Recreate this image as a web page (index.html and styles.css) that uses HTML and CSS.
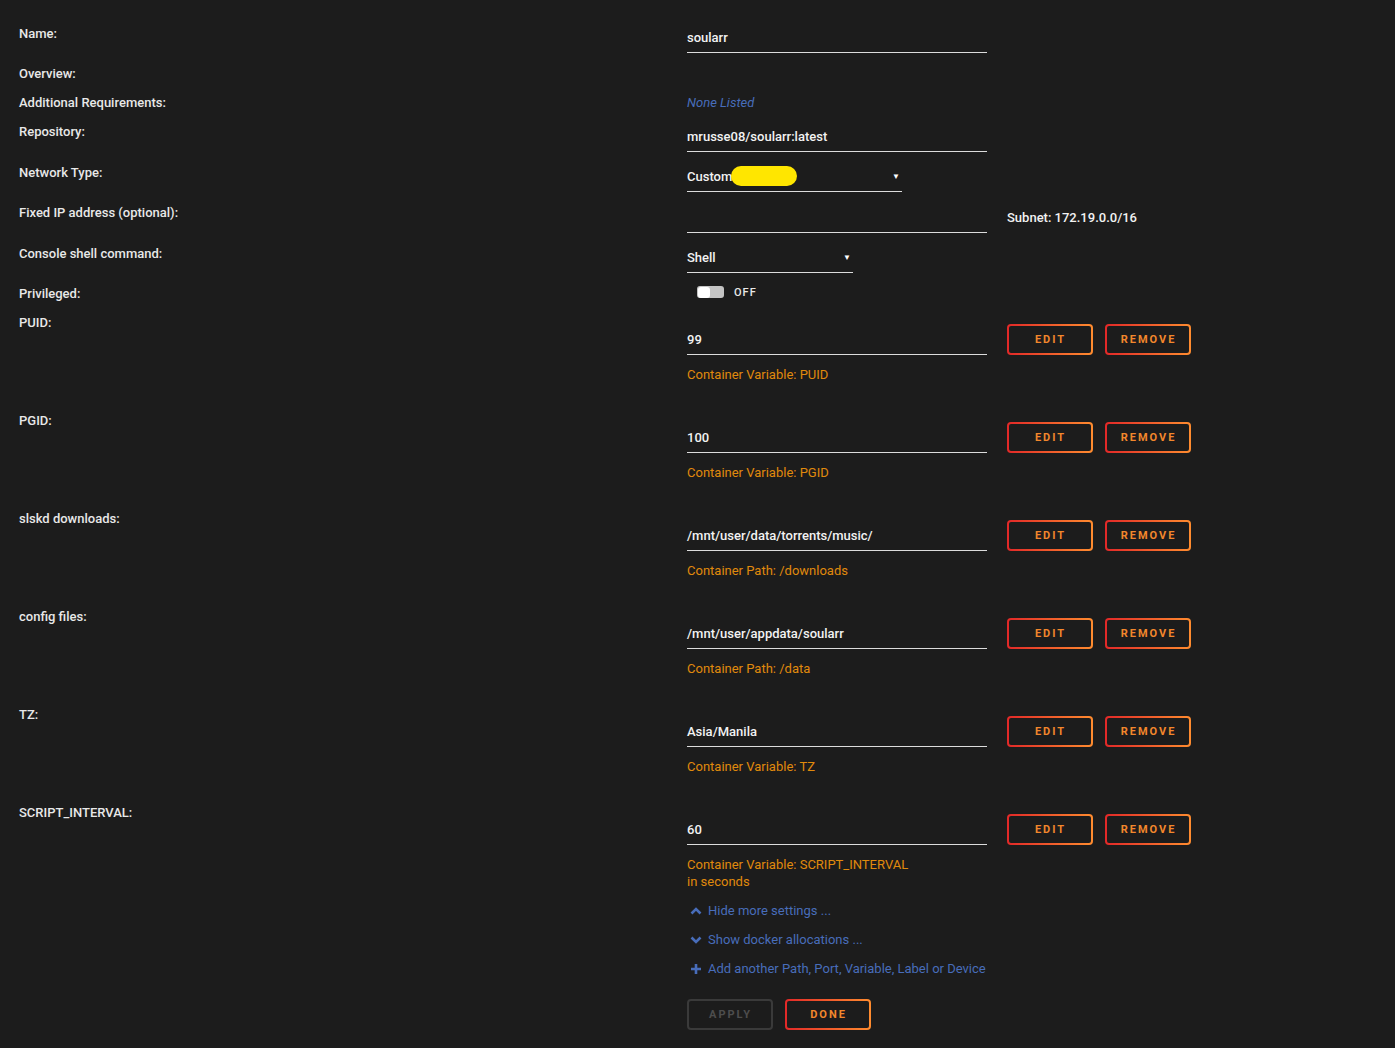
FILE: index.html
```html
<!DOCTYPE html>
<html>
<head>
<meta charset="utf-8">
<link rel="stylesheet" href="styles.css">
</head>
<body>
<div class="page">
  <div class="row r-name">
    <div class="label">Name:</div>
    <div class="value"><div class="input w300">soularr</div></div>
  </div>
  <div class="row r-short">
    <div class="label">Overview:</div>
    <div class="value"></div>
  </div>
  <div class="row r-short">
    <div class="label">Additional Requirements:</div>
    <div class="value"><span class="none">None Listed</span></div>
  </div>
  <div class="row r-field">
    <div class="label">Repository:</div>
    <div class="value"><div class="input w300 h31">mrusse08/soularr:latest</div></div>
  </div>
  <div class="row r-field">
    <div class="label">Network Type:</div>
    <div class="value">
      <div class="input select w215">
        <span class="sel-text">Custom<span class="redact"></span></span>
        <span class="arrow">▼</span>
      </div>
    </div>
  </div>
  <div class="row r-field">
    <div class="label">Fixed IP address (optional):</div>
    <div class="value inline">
      <div class="input w300 h31"></div>
      <span class="subnet">Subnet: 172.19.0.0/16</span>
    </div>
  </div>
  <div class="row r-field">
    <div class="label">Console shell command:</div>
    <div class="value">
      <div class="input select w166">
        <span>Shell</span>
        <span class="arrow">▼</span>
      </div>
    </div>
  </div>
  <div class="row r-short">
    <div class="label">Privileged:</div>
    <div class="value">
      <div class="switch"><span class="track"><span class="knob"></span></span><span class="off">OFF</span></div>
    </div>
  </div>

  <div class="row r-config">
    <div class="label">PUID:</div>
    <div class="value cfg">
      <div class="cfg-line">
        <div class="input w300 h31">99</div>
        <div class="btns"><span class="btn">EDIT</span><span class="btn">REMOVE</span></div>
      </div>
      <div class="desc">Container Variable: PUID</div>
    </div>
  </div>
  <div class="row r-config">
    <div class="label">PGID:</div>
    <div class="value cfg">
      <div class="cfg-line">
        <div class="input w300 h31">100</div>
        <div class="btns"><span class="btn">EDIT</span><span class="btn">REMOVE</span></div>
      </div>
      <div class="desc">Container Variable: PGID</div>
    </div>
  </div>
  <div class="row r-config">
    <div class="label">slskd downloads:</div>
    <div class="value cfg">
      <div class="cfg-line">
        <div class="input w300 h31">/mnt/user/data/torrents/music/</div>
        <div class="btns"><span class="btn">EDIT</span><span class="btn">REMOVE</span></div>
      </div>
      <div class="desc">Container Path: /downloads</div>
    </div>
  </div>
  <div class="row r-config">
    <div class="label">config files:</div>
    <div class="value cfg">
      <div class="cfg-line">
        <div class="input w300 h31">/mnt/user/appdata/soularr</div>
        <div class="btns"><span class="btn">EDIT</span><span class="btn">REMOVE</span></div>
      </div>
      <div class="desc">Container Path: /data</div>
    </div>
  </div>
  <div class="row r-config">
    <div class="label">TZ:</div>
    <div class="value cfg">
      <div class="cfg-line">
        <div class="input w300 h31">Asia/Manila</div>
        <div class="btns"><span class="btn">EDIT</span><span class="btn">REMOVE</span></div>
      </div>
      <div class="desc">Container Variable: TZ</div>
    </div>
  </div>
  <div class="row r-last">
    <div class="label">SCRIPT_INTERVAL:</div>
    <div class="value cfg">
      <div class="cfg-line">
        <div class="input w300 h31">60</div>
        <div class="btns"><span class="btn">EDIT</span><span class="btn">REMOVE</span></div>
      </div>
      <div class="desc">Container Variable: SCRIPT_INTERVAL<br>in seconds</div>
      <div class="links">
        <div class="link"><svg class="ico" viewBox="0 0 12 12"><path d="M1.5 8.5 L6 4 L10.5 8.5" fill="none" stroke="currentColor" stroke-width="2.6" stroke-linejoin="miter"/></svg>Hide more settings ...</div>
        <div class="link"><svg class="ico" viewBox="0 0 12 12"><path d="M1.5 3.5 L6 8 L10.5 3.5" fill="none" stroke="currentColor" stroke-width="2.6" stroke-linejoin="miter"/></svg>Show docker allocations ...</div>
        <div class="link"><svg class="ico" viewBox="0 0 12 12"><path d="M6 1 V11 M1 6 H11" fill="none" stroke="currentColor" stroke-width="2.6"/></svg>Add another Path, Port, Variable, Label or Device</div>
      </div>
      <div class="actions">
        <span class="btn disabled">APPLY</span>
        <span class="btn">DONE</span>
      </div>
    </div>
  </div>
</div>
</body>
</html>
```

FILE: styles.css
```css
* { box-sizing: border-box; }
html, body { margin: 0; padding: 0; }
body {
  background: #1c1c1c;
  color: #f2f2f2;
  font-family: Roboto, "Liberation Sans", Arial, sans-serif;
  font-size: 13px;
}
.page {
  padding: 23px 0 0 19px;
}
.row {
  display: grid;
  grid-template-columns: 668px 1fr;
  align-items: start;
}
.r-name { height: 40px; }
.r-short { height: 29px; }
.r-field { height: 40.5px; }
.r-config { height: 98px; }
.label {
  padding-top: 1px;
  line-height: 20px;
  font-weight: 500;
  color: #e8e8e8;
}
.value { min-height: 20px; }
.none {
  display: inline-block;
  padding-top: 1px;
  color: #486dba;
  font-style: italic;
  line-height: 20px;
}
.input {
  height: 30px;
  border-bottom: 1px solid #dcdcdc;
  display: flex;
  align-items: center;
  font-weight: 500;
  color: #f2f2f2;
}
.h31 { height: 31px; }
.w300 { width: 300px; }
.w215 { width: 215px; }
.w166 { width: 166px; }
.select { justify-content: space-between; padding-right: 2px; height: 30px; padding-top: 1px; }
.sel-text { position: relative; }
.redact {
  position: absolute;
  left: 44px;
  top: -3px;
  width: 66px;
  height: 20px;
  border-radius: 10px;
  background: #ffe600;
}
.arrow {
  font-size: 8px;
  color: #ffffff;
}
.inline { display: flex; align-items: center; gap: 20px; }
.subnet { font-weight: 500; }
.switch {
  display: flex;
  align-items: center;
  gap: 10px;
  margin-left: 10px;
  height: 18px;
}
.track {
  width: 27px;
  height: 12px;
  border-radius: 3px;
  background: #c4c4c4;
  display: flex;
  align-items: center;
  padding-left: 1px;
}
.knob {
  width: 12px;
  height: 11px;
  border-radius: 3px;
  background: #ffffff;
}
.off {
  font-size: 11px;
  font-weight: 500;
  letter-spacing: 1px;
  color: #e8e8e8;
}
.cfg { padding-top: 12px; }
.cfg-line { display: flex; gap: 20px; align-items: flex-start; }
.btns { display: flex; gap: 12px; }
.btn {
  width: 86px;
  height: 31px;
  display: inline-flex;
  align-items: center;
  justify-content: center;
  border: 2px solid transparent;
  border-radius: 4px;
  background: linear-gradient(#1c1c1c, #1c1c1c) padding-box,
              linear-gradient(90deg, #e22828, #ff8c2f) border-box;
  color: #f3872c;
  font-size: 11px;
  font-weight: 700;
  letter-spacing: 2px;
  padding-left: 1px;
}
.btn.disabled {
  background: #1c1c1c;
  border: 2px solid #3a3a3a;
  color: #4d4d4d;
}
.desc {
  margin-top: 11px;
  line-height: 17px;
  color: #e08a0c;
}
.links { margin-top: 6px; }
.link {
  height: 29px;
  display: flex;
  align-items: center;
  color: #486dba;
}
.ico {
  width: 12px;
  height: 12px;
  margin: 0 6px 0 3px;
  color: #486dba;
}
.actions {
  display: flex;
  gap: 12px;
  margin-top: 16px;
}
```
